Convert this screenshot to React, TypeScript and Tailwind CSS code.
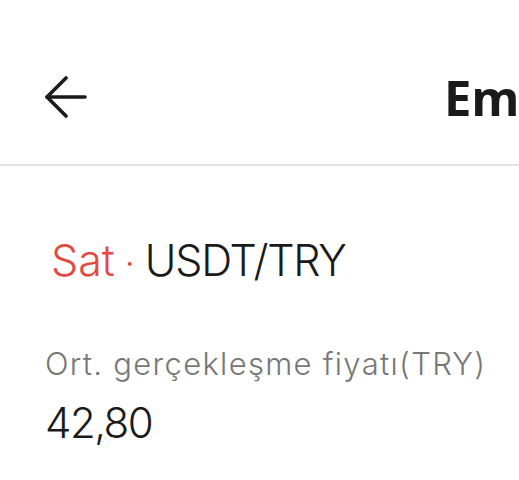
import React from "react";

export default function App() {
  return (
    <div className="w-[519px] h-[480px] bg-white overflow-hidden" style={{ fontFamily: "Inter, 'Liberation Sans', sans-serif" }}>
      <div className="h-[164px] flex items-center pt-[30px] pl-[45px] relative">
        <svg width="42" height="42" viewBox="0 0 42 42" fill="none" stroke="#1a1a1a" strokeWidth="3.6" strokeLinecap="round" strokeLinejoin="round">
          <path d="M40 21H2" />
          <path d="M21 2L2 21L21 40" />
        </svg>
        <div className="absolute left-[444px] top-[70px] text-[49px] leading-[54px] font-bold text-[#1a1a1a] whitespace-nowrap" style={{ fontFamily: "'Noto Sans', sans-serif" }}>
          Emir detayları
        </div>
      </div>
      <div className="h-[2px] bg-[#e3e3e3]" />
      <div className="pl-[45px] font-light">
        <div className="mt-[68px] flex items-baseline text-[43px] leading-[52px] pl-[6px]">
          <span className="text-[#e5483f]">Sat</span>
          <span className="text-[#e5483f] mx-[10px] text-[36px]">·</span>
          <span className="text-[#1a1a1a] tracking-[-1.2px]">USDT/TRY</span>
        </div>
        <div className="mt-[57px] text-[31px] leading-[36px] text-[#777777] tracking-[1.3px] whitespace-nowrap">Ort. gerçekleşme fiyatı(TRY)</div>
        <div className="mt-[17px] text-[42px] leading-[48px] text-[#1a1a1a] tracking-[-1.5px]">42,80</div>
      </div>
    </div>
  );
}
